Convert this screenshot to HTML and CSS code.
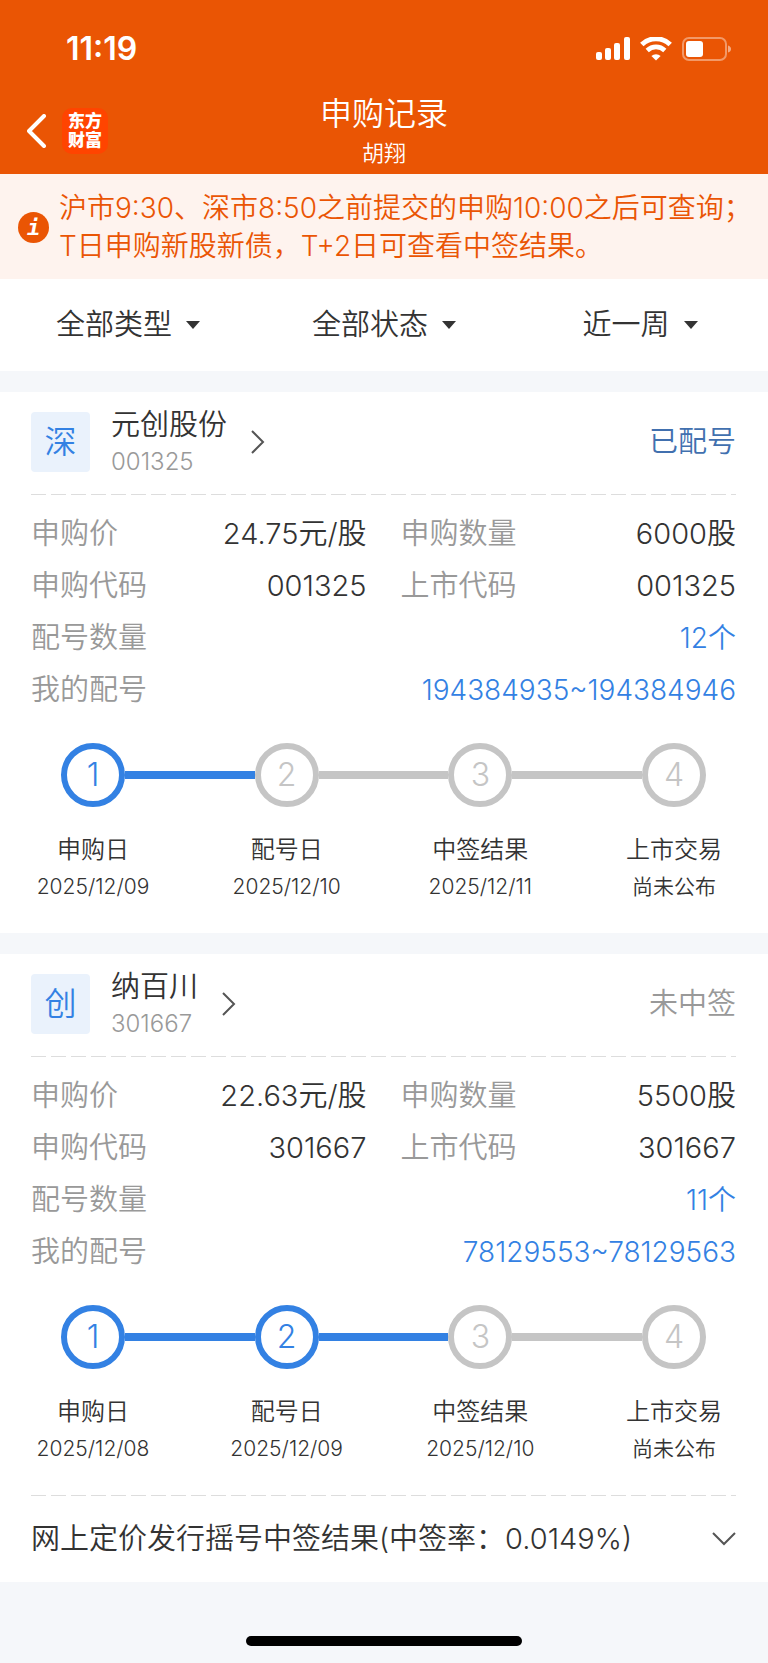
FILE: index.html
```html
<!DOCTYPE html>
<html lang="zh-CN">
<head>
    <meta charset="UTF-8">
    <meta name="viewport" content="width=device-width, initial-scale=1.0">
    <title>申购记录</title>
    <link rel="stylesheet" href="styles.css">
</head>
<body>
    <header class="header">
        <div class="status-bar">
            <span class="time">11:19</span>
            <div class="status-icons">
                <svg width="34" height="24" viewBox="0 0 34 24" fill="#fff">
                    <rect x="0" y="15" width="6" height="8" rx="2"/>
                    <rect x="9" y="11" width="6" height="12" rx="2"/>
                    <rect x="18" y="6" width="6" height="17" rx="2"/>
                    <rect x="28" y="0" width="6" height="23" rx="2"/>
                </svg>
                <svg width="32" height="24" viewBox="0 0 32 24" fill="none" stroke="#fff">
                    <path d="M1.800 7.500a20.500 20.500 0 0 1 28.400 0" stroke-width="5"/>
                    <path d="M7.200 13.500a12.600 12.600 0 0 1 17.600 0" stroke-width="4.600"/>
                    <path d="M16 23.600l-4.600-4.600a6.600 6.600 0 0 1 9.200 0z" fill="#fff" stroke="none"/>
                </svg>
                <svg width="50" height="24" viewBox="0 0 50 24">
                    <rect x="1" y="1" width="43" height="22" rx="6" fill="none" stroke="#fff" stroke-opacity=".4" stroke-width="2"/>
                    <rect x="4" y="4" width="17" height="16" rx="3" fill="#fff"/>
                    <path d="M46 8.500q3 1 3 3.500t-3 3.500z" fill="#fff" fill-opacity=".5"/>
                </svg>
            </div>
        </div>
        <div class="nav">
            <div class="nav-left">
                <button class="back" type="button" aria-label="返回">
                    <svg width="20" height="34" viewBox="0 0 20 34" fill="none" stroke="#fff" stroke-width="4" stroke-linecap="round" stroke-linejoin="round">
                        <path d="M17 2L2 17l15 15"/>
                    </svg>
                </button>
                <span class="brand">东方财富</span>
            </div>
            <div class="nav-title">
                <h1>申购记录</h1>
                <p>胡翔</p>
            </div>
        </div>
    </header>

    <section class="notice">
        <span class="notice-icon">i</span>
        <p>沪市9:30、深市8:50之前提交的申购10:00之后可查询；<br>T日申购新股新债，T+2日可查看中签结果。</p>
    </section>

    <form class="filters">
        <label class="filter">
            <select aria-label="类型"><option>全部类型</option></select>
        </label>
        <label class="filter">
            <select aria-label="状态"><option>全部状态</option></select>
        </label>
        <label class="filter">
            <select aria-label="时间"><option>近一周</option></select>
        </label>
    </form>

    <main>
        <article class="card">
            <div class="card-head">
                <span class="market">深</span>
                <a class="stock" href="#">
                    <span class="stock-text">
                        <span class="stock-name">元创股份</span>
                        <span class="stock-code">001325</span>
                    </span>
                    <svg width="14" height="24" viewBox="0 0 14 24" fill="none" stroke="#555" stroke-width="2">
                        <path d="M1 1l11 11L1 23"/>
                    </svg>
                </a>
                <span class="state state-done">已配号</span>
            </div>
            <div class="dash"></div>
            <dl class="details">
                <div><dt>申购价</dt><dd>24.75元/股</dd></div>
                <div><dt>申购数量</dt><dd>6000股</dd></div>
                <div><dt>申购代码</dt><dd>001325</dd></div>
                <div><dt>上市代码</dt><dd>001325</dd></div>
                <div class="wide"><dt>配号数量</dt><dd><a href="#">12个</a></dd></div>
                <div class="wide"><dt>我的配号</dt><dd><a href="#">194384935~194384946</a></dd></div>
            </dl>
            <div class="track">
                <span class="dot on">1</span>
                <span class="line on"></span>
                <span class="dot">2</span>
                <span class="line"></span>
                <span class="dot">3</span>
                <span class="line"></span>
                <span class="dot">4</span>
            </div>
            <ol class="steps">
                <li><b>申购日</b><span>2025/12/09</span></li>
                <li><b>配号日</b><span>2025/12/10</span></li>
                <li><b>中签结果</b><span>2025/12/11</span></li>
                <li><b>上市交易</b><span>尚未公布</span></li>
            </ol>
        </article>

        <article class="card">
            <div class="card-head">
                <span class="market">创</span>
                <a class="stock" href="#">
                    <span class="stock-text">
                        <span class="stock-name">纳百川</span>
                        <span class="stock-code">301667</span>
                    </span>
                    <svg width="14" height="24" viewBox="0 0 14 24" fill="none" stroke="#555" stroke-width="2">
                        <path d="M1 1l11 11L1 23"/>
                    </svg>
                </a>
                <span class="state">未中签</span>
            </div>
            <div class="dash"></div>
            <dl class="details">
                <div><dt>申购价</dt><dd>22.63元/股</dd></div>
                <div><dt>申购数量</dt><dd>5500股</dd></div>
                <div><dt>申购代码</dt><dd>301667</dd></div>
                <div><dt>上市代码</dt><dd>301667</dd></div>
                <div class="wide"><dt>配号数量</dt><dd><a href="#">11个</a></dd></div>
                <div class="wide"><dt>我的配号</dt><dd><a href="#">78129553~78129563</a></dd></div>
            </dl>
            <div class="track">
                <span class="dot on">1</span>
                <span class="line on"></span>
                <span class="dot on">2</span>
                <span class="line on"></span>
                <span class="dot">3</span>
                <span class="line"></span>
                <span class="dot">4</span>
            </div>
            <ol class="steps">
                <li><b>申购日</b><span>2025/12/08</span></li>
                <li><b>配号日</b><span>2025/12/09</span></li>
                <li><b>中签结果</b><span>2025/12/10</span></li>
                <li><b>上市交易</b><span>尚未公布</span></li>
            </ol>
            <div class="dash"></div>
            <button class="result" type="button" aria-expanded="false">
                <span>网上定价发行摇号中签结果(中签率：0.0149%)</span>
                <svg width="24" height="14" viewBox="0 0 24 14" fill="none" stroke="#555" stroke-width="2">
                    <path d="M1 1l11 11L23 1"/>
                </svg>
            </button>
        </article>
    </main>

    <footer class="home">
        <div class="home-bar"></div>
    </footer>
</body>
</html>
```

FILE: styles.css
```css
* {
    box-sizing: border-box;
    margin: 0;
    padding: 0;
}
body {
    font-family: Inter, "Noto Sans CJK SC", sans-serif;
    font-size: 29px;
    font-weight: 350;
    line-height: 36px;
    color: #333;
    background: #f5f7fa;
}
a {
    color: inherit;
    text-decoration: none;
}
button, select {
    font: inherit;
    color: inherit;
    background: none;
    border: none;
}
svg {
    display: block;
    flex: none;
}

/* header */
.header {
    color: #fff;
    background: #ea5504;
}
.status-bar {
    display: flex;
    justify-content: space-between;
    align-items: center;
    height: 94px;
    padding: 4px 36px 0 66px;
}
.time {
    font-size: 32px;
    font-weight: 600;
}
.status-icons {
    display: flex;
    gap: 10px;
}
.nav {
    display: grid;
    grid-template-columns: 1fr auto 1fr;
    height: 80px;
}
.nav-left {
    display: flex;
    align-items: center;
    gap: 15px;
    padding: 0 0 6px 27px;
}
.brand {
    width: 46px;
    height: 46px;
    padding: 4px 6px;
    font-size: 17px;
    font-weight: 900;
    line-height: 19px;
    border-radius: 10px;
    background: #ff4400;
}
.nav-title {
    text-align: center;
}
.nav-title h1 {
    font-size: 32px;
    font-weight: 350;
    line-height: 40px;
}
.nav-title p {
    font-size: 22px;
    line-height: 38px;
}

/* notice */
.notice {
    display: flex;
    align-items: center;
    gap: 10px;
    padding: 15px 0 14px 18px;
    font-size: 28px;
    line-height: 38px;
    color: #ea5504;
    background: #fef3ee;
}
.notice-icon {
    flex: none;
    width: 31px;
    height: 31px;
    font-family: "DejaVu Sans Mono", monospace;
    font-size: 22px;
    font-weight: bold;
    font-style: italic;
    line-height: 31px;
    text-align: center;
    color: #fff;
    border-radius: 50%;
    background: #ea5504;
}

/* filters */
.filters {
    display: grid;
    grid-template-columns: repeat(3, 1fr);
    height: 92px;
    background: #fff;
}
.filter {
    display: flex;
    align-items: center;
    justify-content: center;
    gap: 13px;
}
.filter select {
    appearance: none;
}
.filter::after {
    content: "";
    border: 7px solid transparent;
    border-top: 8px solid #333;
    border-bottom: none;
}

/* cards */
.card {
    margin-top: 21px;
    padding: 20px 32px 0 31px;
    background: #fff;
}
.card-head {
    display: flex;
    align-items: center;
    height: 60px;
    margin-bottom: 22px;
}
.market {
    width: 59px;
    height: 60px;
    margin-right: 21px;
    font-size: 32px;
    line-height: 60px;
    text-align: center;
    color: #3381e3;
    border-radius: 4px;
    background: #eaf2fc;
}
.stock {
    display: flex;
    align-items: center;
    gap: 24px;
}
.stock-text {
    display: flex;
    flex-direction: column;
    padding-top: 4px;
}
.stock-code {
    font-size: 24px;
    line-height: 38px;
    color: #999;
}
.state {
    margin-left: auto;
    color: #999;
}
.state-done {
    color: #4170af;
}
.dash {
    height: 1px;
    background: repeating-linear-gradient(90deg, #ddd 0 15px, transparent 15px 20px);
}
.details {
    display: grid;
    grid-template-columns: 1fr 1fr;
    column-gap: 34px;
    padding: 13px 0 27px;
    line-height: 52px;
}
.details div {
    display: flex;
    justify-content: space-between;
}
.details .wide {
    grid-column: 1 / 3;
}
.details dt {
    color: #999;
}
.details a {
    font-size: 28px;
    color: #3381e3;
}

/* progress */
.track {
    display: flex;
    align-items: center;
    padding: 0 30px;
}
.dot {
    width: 64px;
    height: 64px;
    font-size: 32px;
    font-weight: 300;
    line-height: 52px;
    text-align: center;
    color: #c5c5c5;
    border: 6px solid #c5c5c5;
    border-radius: 50%;
}
.line {
    flex: 1;
    height: 8px;
    background: #c5c5c5;
}
.dot.on {
    color: #3381e3;
    border-color: #3381e3;
}
.line.on {
    background: #3381e3;
}
.steps {
    display: flex;
    justify-content: space-between;
    padding: 25px 0 27px;
    list-style: none;
}
.steps li {
    width: 124px;
    text-align: center;
}
.steps b, .steps span {
    display: block;
}
.steps b {
    font-size: 24px;
    font-weight: 350;
}
.steps span {
    font-size: 21px;
    line-height: 38px;
}
.result {
    display: flex;
    align-items: center;
    justify-content: space-between;
    width: 100%;
    height: 86px;
    text-align: left;
    cursor: pointer;
}

/* home indicator */
.home {
    padding: 54px 0 17px;
}
.home-bar {
    width: 36%;
    height: 10px;
    margin: auto;
    border-radius: 5px;
    background: #000;
}
```
